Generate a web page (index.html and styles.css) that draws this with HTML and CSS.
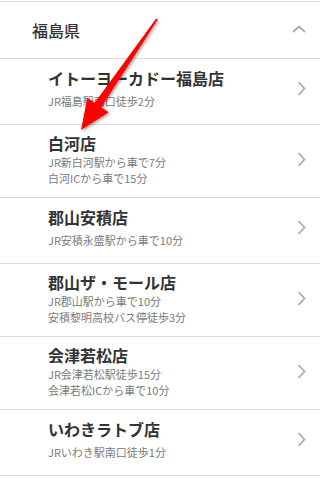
FILE: index.html
```html
<!DOCTYPE html>
<html lang="ja">
<head>
<meta charset="utf-8">
<link rel="stylesheet" href="styles.css">
</head>
<body>
<div class="page">
  <section class="pref">
    <div class="pref-head">
      <h2 class="pref-name">福島県</h2>
      <svg class="chev-up" width="14" height="8" viewBox="0 0 14 8"><polyline points="1,7 7,1.5 13,7" fill="none" stroke="#ababab" stroke-width="1.8"/></svg>
    </div>
    <ul class="shops">
      <li class="shop single">
        <div class="shop-body">
          <div class="shop-name">イトーヨーカドー福島店</div>
          <div class="shop-access">JR福島駅西口徒歩2分</div>
        </div>
        <svg class="chev" width="9" height="15" viewBox="0 0 9 15"><polyline points="1.5,1 7.5,7.5 1.5,14" fill="none" stroke="#ababab" stroke-width="1.8"/></svg>
      </li>
      <li class="shop">
        <div class="shop-body">
          <div class="shop-name">白河店</div>
          <div class="shop-access">JR新白河駅から車で7分<br>白河ICから車で15分</div>
        </div>
        <svg class="chev" width="9" height="15" viewBox="0 0 9 15"><polyline points="1.5,1 7.5,7.5 1.5,14" fill="none" stroke="#ababab" stroke-width="1.8"/></svg>
      </li>
      <li class="shop single">
        <div class="shop-body">
          <div class="shop-name">郡山安積店</div>
          <div class="shop-access">JR安積永盛駅から車で10分</div>
        </div>
        <svg class="chev" width="9" height="15" viewBox="0 0 9 15"><polyline points="1.5,1 7.5,7.5 1.5,14" fill="none" stroke="#ababab" stroke-width="1.8"/></svg>
      </li>
      <li class="shop">
        <div class="shop-body">
          <div class="shop-name">郡山ザ・モール店</div>
          <div class="shop-access">JR郡山駅から車で10分<br>安積黎明高校バス停徒歩3分</div>
        </div>
        <svg class="chev" width="9" height="15" viewBox="0 0 9 15"><polyline points="1.5,1 7.5,7.5 1.5,14" fill="none" stroke="#ababab" stroke-width="1.8"/></svg>
      </li>
      <li class="shop">
        <div class="shop-body">
          <div class="shop-name">会津若松店</div>
          <div class="shop-access">JR会津若松駅徒歩15分<br>会津若松ICから車で10分</div>
        </div>
        <svg class="chev" width="9" height="15" viewBox="0 0 9 15"><polyline points="1.5,1 7.5,7.5 1.5,14" fill="none" stroke="#ababab" stroke-width="1.8"/></svg>
      </li>
      <li class="shop single">
        <div class="shop-body">
          <div class="shop-name">いわきラトブ店</div>
          <div class="shop-access">JRいわき駅南口徒歩1分</div>
        </div>
        <svg class="chev" width="9" height="15" viewBox="0 0 9 15"><polyline points="1.5,1 7.5,7.5 1.5,14" fill="none" stroke="#ababab" stroke-width="1.8"/></svg>
      </li>
    </ul>
  </section>
  <svg class="annot-arrow" width="320" height="479" viewBox="0 0 320 479">
    <defs>
      <filter id="sh" x="-20%" y="-20%" width="140%" height="140%">
        <feDropShadow dx="1.5" dy="1.5" stdDeviation="1.2" flood-color="#000" flood-opacity="0.35"/>
      </filter>
    </defs>
    <polygon filter="url(#sh)" fill="#ff0000" points="156.2,18.4 94.7,102.7 87.3,97.7 81,130 108.7,112.3 101.3,107.3 157.8,19.6"/>
  </svg>
</div>
</body>
</html>
```

FILE: styles.css
```css
html, body {
  margin: 0;
  padding: 0;
  background: #fff;
}
body {
  font-family: "Noto Sans CJK JP", "Noto Sans", sans-serif;
  color: #333;
}
.page {
  position: relative;
  width: 320px;
  height: 479px;
  overflow: hidden;
  padding-top: 1px;
  box-sizing: border-box;
}
.pref {
  border-top: 1px solid #dcdcdc;
}
.pref-head {
  display: flex;
  align-items: center;
  justify-content: space-between;
  height: 56px;
  padding: 0 14px 0 32px;
  border-bottom: 1px solid #dcdcdc;
}
.pref-name {
  margin: 0;
  font-size: 16px;
  font-weight: 500;
  line-height: 20px;
  color: #333;
}
.chev-up {
  display: block;
  margin-top: -2px;
}
.shops {
  list-style: none;
  margin: 0;
  padding: 0;
}
.shop {
  display: flex;
  align-items: center;
  justify-content: space-between;
  padding: 8px 14px 11px 48px;
  border-bottom: 1px solid #dcdcdc;
}
.shop.single {
  padding-top: 9px;
  padding-bottom: 15px;
}
.shop-name {
  font-size: 16px;
  font-weight: 700;
  line-height: 20px;
  color: #333;
}
.shop-access {
  margin-top: 1px;
  font-size: 11px;
  line-height: 16px;
  color: #7a7a7a;
}
.shop.single .shop-access {
  margin-top: 5px;
}
.chev {
  display: block;
  flex: none;
}
.annot-arrow {
  position: absolute;
  left: 0;
  top: 0;
  pointer-events: none;
}
```
